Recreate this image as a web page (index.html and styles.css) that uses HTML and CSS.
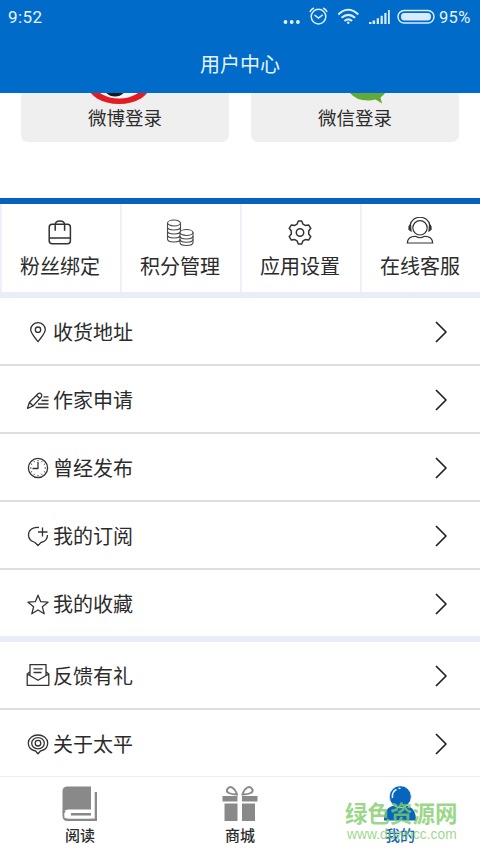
FILE: index.html
```html
<!DOCTYPE html>
<html lang="zh-CN">
<head>
<meta charset="utf-8">
<title>用户中心</title>
<link rel="stylesheet" href="styles.css">
</head>
<body>
<div class="app">
  <header class="header">
    <div class="status">
      <span class="time">9:52</span>
      <svg class="status-icons" width="154" height="34" viewBox="0 0 154 34" fill="none" stroke="#d8ecff">
        <g fill="#e4f2ff" stroke="none"><circle cx="5.5" cy="22" r="1.9"/><circle cx="11.7" cy="22" r="1.9"/><circle cx="17.9" cy="22" r="1.9"/></g>
        <g stroke-width="1.5" stroke-linecap="round"><circle cx="38.5" cy="16.6" r="7.3"/><path d="M35 15.3l3.5 2.7 3.8-2.8M30.2 11.6q.8-2.3 3.3-3.3M46.8 11.6q-.8-2.3-3.3-3.3"/></g>
        <g stroke-width="2.1"><path d="M58.3 14.4q10-9.3 20 0M61.5 17.8q6.800-6 13.600 0M64.500 21q3.800-3.300 7.600 0"/><circle cx="68.300" cy="22.700" r="1.200" fill="#e4f2ff" stroke="none"/></g>
        <g fill="#d8ecff" stroke="none"><path d="M89 22h2.500v2H89zM92.600 20.500h2.500V24h-2.500zM96.700 18.300h2.300V24h-2.300zM100.600 15.800h2.200V24h-2.200zM104.300 13h2.200v11h-2.200zM108 10h1.800v14H108z"/></g>
        <rect x="118" y="10.500" width="36" height="12.500" rx="6.200" stroke-width="1.500"/><rect x="121" y="13" width="30" height="7.500" rx="3.400" fill="#d8ecff" stroke="none"/>
      </svg>
      <span class="percent">95%</span>
    </div>
    <h1 class="title">用户中心</h1>
  </header>

  <section class="logins">
    <a class="login">
      <svg class="brand" width="64" height="12" viewBox="0 0 64 12"><ellipse cx="32" cy="-9" rx="31.500" ry="20" fill="#e31b23"/><ellipse cx="32" cy="-9" rx="24" ry="14.500" fill="#f5f5f5"/><circle cx="28" cy="-9" r="12.500" fill="#17191d"/></svg>
      <span>微博登录</span>
    </a>
    <a class="login">
      <svg class="brand wechat" width="64" height="12" viewBox="0 0 64 12"><path d="M10 0q6 7.500 18 7.500 4 0 7.500-1l6.500 4-1.500-6q3-2 4.500-4.500z" fill="#62a83b"/></svg>
      <span>微信登录</span>
    </a>
  </section>

  <nav class="tiles">
    <a class="tile"><svg width="30" height="30" viewBox="0 0 30 30" fill="none" stroke="#333" stroke-width="1.500" stroke-linejoin="round"><rect x="4.200" y="7.200" width="21.200" height="19.600" rx="3"/><path d="M4.200 21h21.200M10.200 13.700V8q0-4 4.700-4T19.600 8v5.700"/></svg><span>粉丝绑定</span></a>
    <a class="tile"><svg width="30" height="30" viewBox="0 0 30 30" fill="none" stroke="#4a4a4a" stroke-width="1.100"><ellipse cx="9" cy="6" rx="6.500" ry="3"/><path d="M2.500 6v16c0 4 13 4 13 0V6M2.500 10c0 4 13 4 13 0M2.500 14c0 4 13 4 13 0M2.500 18c0 4 13 4 13 0"/><path d="M15 15.500v10c0 4 13 4 13 0v-10z" fill="#fff"/><ellipse cx="21.500" cy="15.500" rx="6.500" ry="3" fill="#fff"/><path d="M15 19c0 4 13 4 13 0M15 22.300c0 4 13 4 13 0"/></svg><span>积分管理</span></a>
    <a class="tile"><svg width="30" height="30" viewBox="0 0 30 30" fill="none" stroke="#333" stroke-width="1.500" stroke-linejoin="round"><path d="M13.300 4h3.400l1.300 3.200 2.200 1.200 3.400-.5 2.200 3.400-2.100 2.700v3l2.100 2.700-2.200 3.400-3.400-.5-2.200 1.200-1.300 3.200h-3.400L12 23.800l-2.200-1.200-3.400.5-2.200-3.400L6.300 17v-3l-2.100-2.700 2.200-3.400 3.400.5L12 7.200z"/><circle cx="15" cy="15.500" r="3.700"/></svg><span>应用设置</span></a>
    <a class="tile"><svg width="30" height="30" viewBox="0 0 30 30" fill="none" stroke="#333" stroke-width="1.200"><circle cx="15" cy="10.800" r="7.200"/><path d="M5 8.500C7-2.500 23-2.500 25 8.500M11 19.500Q3 19 2.300 26h25.400Q27 19 19 19.500q-4 2.500-8 0z"/><path d="M5.500 7.500L4 9.500v3l2 1.500zM24.500 7.500l1.500 2v3L24 14z" fill="#333"/></svg><span>在线客服</span></a>
  </nav>

  <section class="list">
    <a class="row"><svg class="icon" width="24" height="24" viewBox="0 0 24 24"><path d="M12 21.700C9 17.500 4.700 13.500 4.700 9.600a7.300 6.900 0 0 1 14.600 0c0 3.900-4.300 7.900-7.300 12.100z"/><circle cx="12" cy="9.700" r="2.700"/></svg><span>收货地址</span><svg class="chevron" width="12" height="22" viewBox="0 0 12 22"><path d="M1 1l10 10L1 21"/></svg></a>
    <a class="row"><svg class="icon" width="24" height="24" viewBox="0 0 24 24"><path d="M1.500 20.300l2-6L12.300 5.500q1.500-1 3 .5 1 1.500 0 3L7 18zM3.500 14.300L7 18M10.500 7.500l3.500 3.200M17.500 8.800h5M15.500 12.500h7M12 16h10.500M9.500 19.500h13"/></svg><span>作家申请</span><svg class="chevron" width="12" height="22" viewBox="0 0 12 22"><path d="M1 1l10 10L1 21"/></svg></a>
    <a class="row"><svg class="icon" width="24" height="24" viewBox="0 0 24 24"><circle cx="12" cy="12" r="9.600"/><path d="M12 6v6.500H6.500"/><path class="ticks" d="M12 4v1.300M12 19v1.500M18.500 12H20M4 12h1.500M16 5.200l-.6 1M18.900 8l-1 .5M8 5.200l.6 1M5.100 8l1 .5M16 18.800l-.6-1M18.900 16l-1-.5M8 18.800l.6-1M5.100 16l1-.5"/></svg><span>曾经发布</span><svg class="chevron" width="12" height="22" viewBox="0 0 12 22"><path d="M1 1l10 10L1 21"/></svg></a>
    <a class="row"><svg class="icon" width="24" height="24" viewBox="0 0 24 24"><path d="M13 3.500C7 2.500 2.500 6 2.500 11c0 4.500 3 6.500 6.500 7.500l3 3 3-3c4-1 6.500-3.500 6.500-7.500M16.500 3.500v9M12 8h9.500"/></svg><span>我的订阅</span><svg class="chevron" width="12" height="22" viewBox="0 0 12 22"><path d="M1 1l10 10L1 21"/></svg></a>
    <a class="row"><svg class="icon" width="24" height="24" viewBox="0 0 24 24"><path d="M12 3.200l2.700 6.500 7.300.5-5.600 4.600 1.800 7-6.200-3.800-6.200 3.800 1.800-7L2 10.200l7.300-.5z"/></svg><span>我的收藏</span><svg class="chevron" width="12" height="22" viewBox="0 0 12 22"><path d="M1 1l10 10L1 21"/></svg></a>
  </section>
  <section class="list">
    <a class="row"><svg class="icon" width="24" height="24" viewBox="0 0 24 24"><path d="M4 7.800L1.200 10v11.300h21.600V10L20 7.800M1.200 10L12 16.300 22.800 10M4 11.500V.5h16v11M7.500 4.800h9M7.500 8.500h8"/></svg><span>反馈有礼</span><svg class="chevron" width="12" height="22" viewBox="0 0 12 22"><path d="M1 1l10 10L1 21"/></svg></a>
    <a class="row"><svg class="icon" width="24" height="24" viewBox="0 0 24 24"><path d="M9.500 19C5 18 2.300 15 2.300 11 2.300 6.500 6.800 3 12 3s9.700 3.500 9.700 8c0 4-2.700 7-7.200 8L12 21.700z"/><ellipse cx="12" cy="11.200" rx="6.300" ry="5.600"/><circle cx="12" cy="11.200" r="2.800"/></svg><span>关于太平</span><svg class="chevron" width="12" height="22" viewBox="0 0 12 22"><path d="M1 1l10 10L1 21"/></svg></a>
  </section>

  <footer class="tabs">
    <a class="tab"><svg width="36" height="36" viewBox="0 0 36 36" fill="#898989"><path d="M5.500.5H29v23H6q-3.500.5-5.500 3V5.500q0-5 5-5z"/><path d="M.5 25v5q0 5 5 5H35V6h-2.300v26.500H7q-4.500 0-4.500-4 0-3.500 4.500-3.500z"/><path d="M9 27h20v2.400H9z"/><path d="M2.500 32V28q0-3.700 4.500-3.700h22V27H9v2.400h20v3H7z" fill="#fff"/><path d="M9 27h20v2.400H9z"/></svg><span>阅读</span></a>
    <a class="tab"><svg width="36" height="36" viewBox="0 0 36 36" fill="#898989"><path d="M.5 10h15v5.500H.5zM20 10h15.500v5.500H20zM2.500 17.500h13V35h-13zM20 17.500h13V35H20z"/><path d="M15 8.500Q3.500 8 5 3.500 8-1.500 12.500 3.500 14.500 6 15 8.500zM20.500 8.500Q32 8 30.500 3.500 27.500-1.500 23 3.500 21 6 20.500 8.500z" fill="none" stroke="#898989" stroke-width="1.900"/></svg><span>商城</span></a>
    <a class="tab active"><svg width="36" height="36" viewBox="0 0 36 36"><path d="M2 34.500Q2 21.500 12 19.500h12q10 2 10 15z" fill="#0865bd"/><circle cx="18.300" cy="10.700" r="11" fill="#0865bd" stroke="#fff" stroke-width=".8"/><path d="M10.500 12Q9.500 6 14.500 3.500M16.500 2.500l2-.3" fill="none" stroke="#e4f1fc" stroke-width="1.600"/></svg><span>我的</span></a>
  </footer>

  <div class="watermark"><b>绿色资源网</b><span>www.downcc.com</span></div>
</div>
</body>
</html>
```

FILE: styles.css
```css
* { box-sizing: border-box; }
body {
  margin: 0;
  background: #fff;
  color: #2b2b2b;
  font-family: "Noto Sans CJK SC", sans-serif;
}
.app {
  position: relative;
  width: 480px;
  height: 853px;
  overflow: hidden;
}
.header {
  height: 93px;
  background: #006bc8;
  color: #e6f3ff;
}
.status {
  display: flex;
  height: 34px;
  padding: 0 7px 0 8px;
  font-family: Roboto, sans-serif;
  font-size: 17px;
  line-height: 35px;
}
.time { flex: 1; letter-spacing: .4px; }
.status-icons { margin-right: 5px; overflow: visible; }
.percent { width: 34px; font-size: 16.5px; letter-spacing: .3px; }
.title {
  margin: 0;
  font-size: 20px;
  font-weight: 400;
  line-height: 59px;
  text-align: center;
}
.logins {
  display: flex;
  gap: 22px;
  height: 105px;
  padding-left: 21px;
}
.login {
  display: flex;
  flex-direction: column;
  align-items: center;
  width: 208px;
  height: 49px;
  border-radius: 0 0 7px 7px;
  background: #efefef;
  font-size: 18.5px;
  line-height: 24px;
}
.brand { flex: none; margin-left: -12px; }
.wechat { margin-left: 34px; }
.tiles {
  display: grid;
  grid-template-columns: repeat(4, 1fr);
  height: 100px;
  border-top: 6px solid #0862bd;
  border-bottom: 6px solid #e9edf7;
}
.tile {
  display: flex;
  flex-direction: column;
  align-items: center;
  gap: 3px;
  padding: 13px 2px 0 0;
  border-left: 2px solid #eff1f9;
  font-size: 20px;
  line-height: 32px;
}
.list + .list { border-top: 6px solid #e9edf7; }
.row {
  display: flex;
  align-items: center;
  height: 68px;
  padding: 2px 33px 0 26px;
  border-bottom: 2px solid #dedede;
  font-size: 20px;
}
.row:last-child {
  height: 66px;
  border-bottom: 0;
}
.row span {
  flex: 1;
  margin-left: 3px;
  line-height: 30px;
}
.icon, .chevron {
  fill: none;
  stroke: #333;
  stroke-width: 1.3;
  stroke-linejoin: round;
}
.ticks { stroke-width: 1; }
.chevron {
  stroke: #222;
  stroke-width: 1.7;
  overflow: visible;
}
.tabs {
  display: flex;
  height: 77px;
  border-top: 1px solid #ededed;
}
.tab {
  display: flex;
  flex: 1;
  flex-direction: column;
  align-items: center;
  padding-top: 9px;
  font-size: 15px;
  font-weight: 500;
  line-height: 26px;
}
.active { color: #1263b4; }
.watermark {
  position: absolute;
  left: 345px;
  top: 796px;
  width: 113px;
  color: rgba(128, 205, 105, .78);
}
.watermark b, .watermark span { display: block; white-space: nowrap; }
.watermark b { font-size: 22.5px; line-height: 32px; }
.watermark span {
  margin: -1px 0 0 2px;
  font-family: "Liberation Sans", sans-serif;
  font-size: 13.8px;
  line-height: 16px;
}
```
